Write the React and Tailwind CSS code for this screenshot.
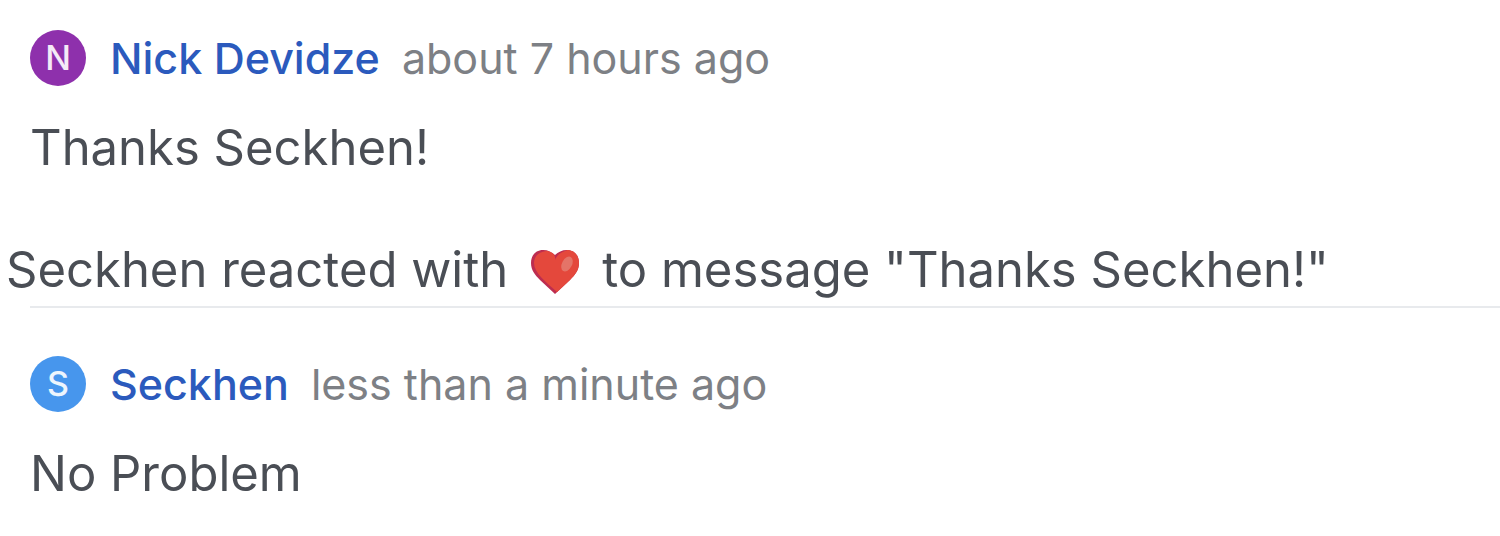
function Avatar({ letter, color }) {
  return (
    <span aria-hidden="true" className={`flex h-14 w-14 shrink-0 items-center justify-center rounded-full text-[34px] font-medium leading-none text-white/90 ${color}`}>
      {letter}
    </span>
  );
}

function Message({ author, letter, color, time, children }) {
  return (
    <article className="pl-[30px]">
      <header className="flex h-14 items-center">
        <Avatar letter={letter} color={color} />
        <span className="ml-6 text-[43px] font-medium text-[#2b5abd]">{author}</span>
        <time className="ml-[22px] text-[43px] text-[#7d8085]">{time}</time>
      </header>
      <p className="mt-8 text-[49px] leading-[60px] text-[#4a4e55]">{children}</p>
    </article>
  );
}

function Heart() {
  return (
    <svg viewBox="0 -4 50 50" role="img" aria-label="heart" className="mx-[22px] size-[50px] shrink-0">
      <defs>
        <clipPath id="heart-shape">
          <path d="M25 6C22 3 18 1 13 1C6 1 1 6 1 14C1 21 5 26 10 31C15 36 20 40 25 45C30 40 35 36 40 31C45 26 49 21 49 14C49 6 44 1 37 1C32 1 28 3 25 6Z" />
        </clipPath>
      </defs>
      <g clipPath="url(#heart-shape)">
        <path fill="#bd2d50" d="M0 0H50V46H0Z" />
        <path fill="#e4483c" d="M25 11C26 5 21 2 16 2C8 3 4 8 4 14C4 24 16 33 27 43L32 46H50V0H41C33 2 27 5 25 11Z" />
        <ellipse cx="37" cy="15" rx="5" ry="8" fill="#e47468" transform="rotate(28 37 15)" />
      </g>
    </svg>
  );
}

export default function App() {
  return (
    <main className="min-h-screen bg-white pt-[30px] font-['Inter',sans-serif]">
      <Message author="Nick Devidze" letter="N" color="bg-[#8e30ac]" time="about 7 hours ago">Thanks Seckhen!</Message>
      <p className="mt-[62px] flex items-center whitespace-nowrap pl-[6px] text-[49px] leading-[60px] text-[#4a4e55]">
        <span>Seckhen reacted with</span>
        <Heart />
        <span>to message "Thanks Seckhen!"</span>
      </p>
      <hr className="mb-12 ml-[30px] mt-[6px] border-t-2 border-[#e8eaed]" />
      <Message author="Seckhen" letter="S" color="bg-[#4796ed]" time="less than a minute ago">No Problem</Message>
    </main>
  );
}
